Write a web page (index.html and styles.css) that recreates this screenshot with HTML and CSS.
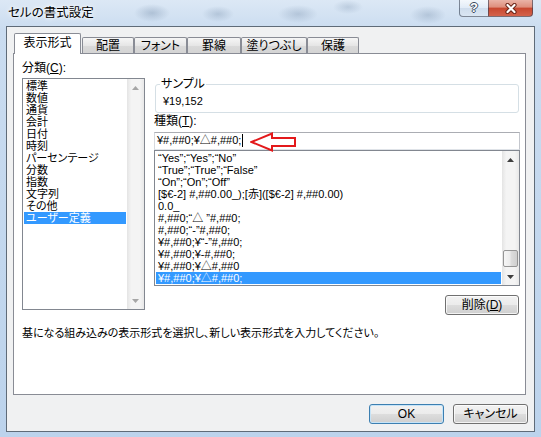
FILE: index.html
```html
<!DOCTYPE html>
<html lang="ja">
<head>
<meta charset="utf-8">
<title>セルの書式設定</title>
<link rel="stylesheet" href="styles.css">
</head>
<body>
<div class="window">
  <div class="titlebar">
    <div class="title">セルの書式設定</div>
    <div class="caption">
      <div class="cap-btn cap-help">?</div>
      <div class="cap-btn cap-close">
        <svg width="14" height="11" viewBox="0 0 14 11"><path d="M3.5 2 L10.5 9 M10.5 2 L3.5 9" stroke="#6a2418" stroke-width="4.2" stroke-linecap="round" fill="none"/><path d="M3.5 2 L10.5 9 M10.5 2 L3.5 9" stroke="#fff" stroke-width="2.2" stroke-linecap="round" fill="none"/></svg>
      </div>
    </div>
  </div>
  <div class="client">
    <div class="tabs">
      <div class="tab is-active tab-format">表示形式</div>
      <div class="tab tab-align">配置</div>
      <div class="tab tab-font">フォント</div>
      <div class="tab tab-border">罫線</div>
      <div class="tab tab-fill">塗りつぶし</div>
      <div class="tab tab-protect">保護</div>
    </div>
    <div class="panel">
      <div class="columns">
        <div class="left-col">
          <div class="label">分類(<u>C</u>):</div>
          <div class="listbox cat-list">
            <ul class="list-items">
              <li>標準</li>
              <li>数値</li>
              <li>通貨</li>
              <li>会計</li>
              <li>日付</li>
              <li>時刻</li>
              <li>パーセンテージ</li>
              <li>分数</li>
              <li>指数</li>
              <li>文字列</li>
              <li>その他</li>
              <li class="is-selected">ユーザー定義</li>
            </ul>
            <div class="scrollbar is-disabled">
              <div class="sb-btn"><svg width="7" height="4" viewBox="0 0 7 4"><path d="M0 4 L3.5 0 L7 4 Z"/></svg></div>
              <div class="sb-track"></div>
              <div class="sb-btn"><svg width="7" height="4" viewBox="0 0 7 4"><path d="M0 0 L3.5 4 L7 0 Z"/></svg></div>
            </div>
          </div>
        </div>
        <div class="right-col">
          <fieldset class="sample">
            <legend>サンプル</legend>
            <div class="sample-value">¥19,152</div>
          </fieldset>
          <div class="label type-label">種類(<u>T</u>):</div>
          <div class="field">
            <div class="textbox">¥#,##0;¥△#,##0;<span class="caret"></span></div>
            <svg class="annot-arrow" width="47" height="20" viewBox="0 0 47 20"><path d="M1.5 10 L22 1.5 L22 6 L45 6 L45 14 L22 14 L22 18.5 Z" fill="#fff" stroke="#e3191b" stroke-width="2" stroke-linejoin="miter"/></svg>
          </div>
          <div class="listbox fmt-list">
            <ul class="list-items">
              <li>“Yes”;“Yes”;“No”</li>
              <li>“True”;“True”;“False”</li>
              <li>“On”;“On”;“Off”</li>
              <li>[$€-2] #,##0.00_);[赤]([$€-2] #,##0.00)</li>
              <li>0.0_</li>
              <li>#,##0;“△ ”#,##0;</li>
              <li>#,##0;“-”#,##0;</li>
              <li>¥#,##0;¥“-”#,##0;</li>
              <li>¥#,##0;¥-#,##0;</li>
              <li>¥#,##0;¥△#,##0</li>
              <li class="is-selected">¥#,##0;¥△#,##0;</li>
            </ul>
            <div class="scrollbar">
              <div class="sb-btn"><svg width="7" height="4" viewBox="0 0 7 4"><path d="M0 4 L3.5 0 L7 4 Z"/></svg></div>
              <div class="sb-track"><div class="sb-thumb"></div></div>
              <div class="sb-btn"><svg width="7" height="4" viewBox="0 0 7 4"><path d="M0 0 L3.5 4 L7 0 Z"/></svg></div>
            </div>
          </div>
          <div class="delete-row">
            <button class="btn btn-delete">削除(<u>D</u>)</button>
          </div>
        </div>
      </div>
      <p class="desc">基になる組み込みの表示形式を選択し、新しい表示形式を入力してください。</p>
    </div>
    <div class="buttons">
      <button class="btn btn-dialog btn-default">OK</button>
      <button class="btn btn-dialog">キャンセル</button>
    </div>
  </div>
</div>
</body>
</html>
```

FILE: styles.css
```css
* { box-sizing: border-box; }
html, body { margin: 0; padding: 0; }
body {
  width: 541px;
  height: 437px;
  overflow: hidden;
  font-family: "Liberation Sans", "Noto Sans CJK JP", sans-serif;
  font-size: 12px;
  line-height: 14px;
  color: #000;
  font-feature-settings: "palt";
  background:
    radial-gradient(ellipse 18px 9px at 152px 13px, rgba(105, 130, 160, 0.35), rgba(105, 130, 160, 0) 100%),
    radial-gradient(ellipse 16px 8px at 218px 14px, rgba(105, 130, 160, 0.3), rgba(105, 130, 160, 0) 100%),
    radial-gradient(ellipse 20px 9px at 298px 14px, rgba(105, 130, 160, 0.3), rgba(105, 130, 160, 0) 100%),
    radial-gradient(ellipse 15px 7px at 348px 7px, rgba(105, 130, 160, 0.25), rgba(105, 130, 160, 0) 100%),
    radial-gradient(ellipse 18px 9px at 428px 15px, rgba(105, 130, 160, 0.3), rgba(105, 130, 160, 0) 100%),
    linear-gradient(#dce8f5, #cadcf0 30px, #bcd3ec);
}

.window {
  height: 437px;
  display: flex;
  flex-direction: column;
  padding: 0 6px 5px;
}

.titlebar {
  height: 26px;
  flex: none;
  margin: 0 -6px;
  padding: 0 8px;
  display: flex;
  justify-content: space-between;
  align-items: flex-start;
}
.title {
  font-size: 12.5px;
  line-height: 16px;
  padding-top: 5px;
  text-shadow: 0 0 6px #fff, 0 0 3px #fff;
}
.caption { display: flex; }
.cap-btn {
  height: 17px;
  display: flex;
  align-items: center;
  justify-content: center;
  border: 1px solid rgba(50, 62, 82, 0.6);
  border-top: 0;
}
.cap-help {
  width: 29px;
  border-right: 0;
  border-radius: 0 0 0 4px;
  background: linear-gradient(rgba(255, 255, 255, 0.7), rgba(232, 240, 248, 0.55) 50%, rgba(200, 214, 230, 0.55) 50%, rgba(222, 232, 243, 0.65));
  color: #fff;
  font-weight: bold;
  font-size: 13px;
  line-height: 14px;
  text-shadow: 1px 0 #3c4a5e, -1px 0 #3c4a5e, 0 1px #3c4a5e, 0 -1px #3c4a5e;
}
.cap-close {
  width: 45px;
  border-radius: 0 0 4px 0;
  background: linear-gradient(#eab3a7, #de8e7c 45%, #c8472f 50%, #d4634c);
}

.client {
  height: 406px;
  flex: none;
  border: 1px solid #5f6b78;
  background: #f0f1f2;
  padding: 6px 8px 0 6px;
  display: flex;
  flex-direction: column;
}

/* tabs */
.tabs {
  display: flex;
  align-items: flex-end;
  height: 20px;
  flex: none;
}
.tab {
  height: 16px;
  border: 1px solid #898c95;
  border-bottom: 0;
  border-radius: 2px 2px 0 0;
  background: linear-gradient(#f6f6f6, #e6e6e6 50%, #dadada 50%, #d4d4d4);
  text-align: center;
  padding-top: 1px;
  white-space: nowrap;
}
.tab.is-active {
  height: 21px;
  margin: 0 1px -1px 1px;
  padding-top: 2px;
  background: #fff;
  position: relative;
  z-index: 1;
}
.tab-format { width: 67px; }
.tab-align { width: 52px; }
.tab-font { width: 53px; }
.tab-border { width: 54px; }
.tab-fill { width: 66px; }
.tab-protect { width: 52px; }

/* panel */
.panel {
  height: 342px;
  flex: none;
  border: 1px solid #898c95;
  background: #fff;
  padding: 7px 5px 0 8px;
}
.columns {
  display: flex;
  gap: 9px;
}
.left-col { width: 123px; flex: none; }
.right-col {
  width: 366px;
  flex: none;
  display: flex;
  flex-direction: column;
}

/* list boxes */
.listbox {
  display: flex;
  border: 1px solid #828790;
  background: #fff;
}
.cat-list {
  height: 232px;
  margin-top: 3px;
  font-size: 11px;
}
.fmt-list {
  height: 136px;
  font-size: 11px;
}
.list-items {
  flex: 1;
  margin: 0;
  padding: 1px;
  list-style: none;
  overflow: hidden;
}
.list-items li {
  height: 12px;
  line-height: 12px;
  padding-left: 2px;
  white-space: nowrap;
  overflow: hidden;
}
.list-items li.is-selected {
  background: #3399ff;
  color: #fff;
}

.scrollbar {
  width: 17px;
  flex: none;
  display: flex;
  flex-direction: column;
  background: linear-gradient(90deg, #e4e4e4, #f4f4f4 25%, #f4f4f4 75%, #e8e8e8);
}
.sb-btn {
  height: 17px;
  flex: none;
  display: flex;
  align-items: center;
  justify-content: center;
}
.sb-btn svg { fill: #3f3f3f; }
.scrollbar.is-disabled .sb-btn svg { fill: #a6a6a6; }
.sb-track {
  flex: 1;
  display: flex;
  flex-direction: column;
  justify-content: flex-end;
}
.sb-thumb {
  height: 17px;
  margin: 0 1px 1px;
  border: 1px solid #959595;
  border-radius: 2px;
  background: linear-gradient(90deg, #f6f6f6, #ececec 45%, #dcdcdc 55%, #cfcfcf);
}

/* sample group */
.sample {
  margin: 16px 1px 0;
  height: 36px;
  border: 1px solid #d5dfe5;
  border-radius: 3px;
  padding: 0 0 0 4px;
  min-width: 0;
}
.sample legend {
  padding: 0 1px;
  line-height: 14px;
}
.sample-value {
  font-size: 11px;
  padding: 3px 0 0 3px;
}

.type-label { margin-top: 1px; }

.field {
  margin-top: 4px;
  position: relative;
}
.textbox {
  height: 18px;
  border: 1px solid;
  border-color: #abadb3 #c4c7cd #dfe3e8 #d6d9de;
  font-size: 11px;
  line-height: 14px;
  padding: 0 2px;
  white-space: nowrap;
}
.caret {
  display: inline-block;
  width: 1px;
  height: 13px;
  background: #000;
  vertical-align: -3px;
  margin-left: 1px;
}
.annot-arrow {
  position: absolute;
  left: 96px;
  top: 0;
}

/* buttons */
.btn {
  height: 20px;
  padding: 0;
  border: 1px solid #707070;
  border-radius: 3px;
  background: linear-gradient(#f2f2f2, #ebebeb 50%, #dddddd 50%, #cfcfcf);
  box-shadow: inset 0 0 0 1px rgba(255, 255, 255, 0.75);
  font: inherit;
  line-height: 16px;
  color: #000;
}
.delete-row {
  margin-top: 9px;
  display: flex;
  justify-content: flex-end;
  padding-right: 1px;
}
.btn-delete { width: 74px; }

.desc {
  margin: 11px 0 0;
  font-size: 11px;
}

.buttons {
  display: flex;
  justify-content: flex-end;
  gap: 9px;
  margin: 9px -2px 0 0;
}
.btn-dialog { width: 75px; }
.btn-default {
  border-color: #3c7fb1;
  box-shadow: inset 0 0 0 1px #c6e4f8;
}
```
